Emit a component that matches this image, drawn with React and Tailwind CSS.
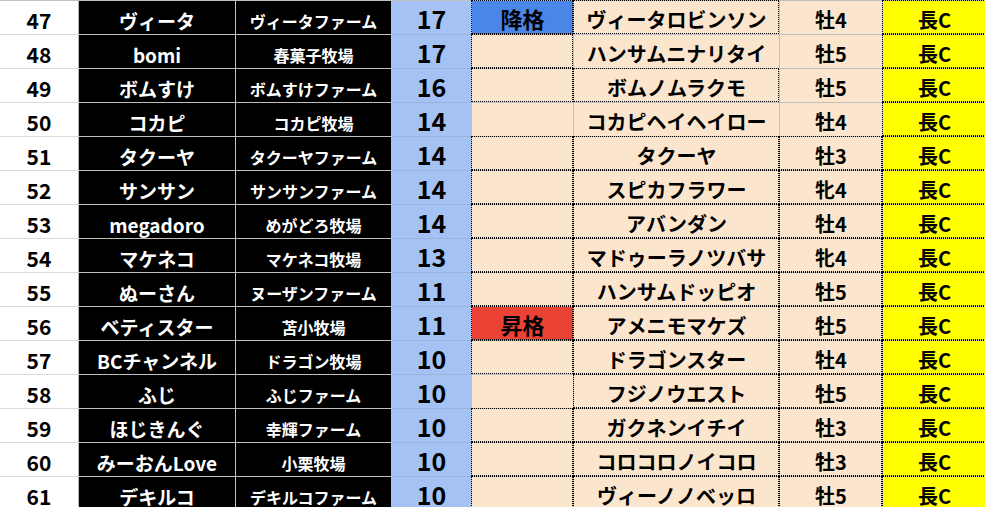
import React from 'react';

const rows = [
  [47, 'ヴィータ', 'ヴィータファーム', 17, '降格', 'ヴィータロビンソン', '牡4'],
  [48, 'bomi', '春菓子牧場', 17, '', 'ハンサムニナリタイ', '牡5'],
  [49, 'ボムすけ', 'ボムすけファーム', 16, '', 'ボムノムラクモ', '牡5'],
  [50, 'コカピ', 'コカピ牧場', 14, '', 'コカピヘイヘイロー', '牡4'],
  [51, 'タクーヤ', 'タクーヤファーム', 14, '', 'タクーヤ', '牡3'],
  [52, 'サンサン', 'サンサンファーム', 14, '', 'スピカフラワー', '牝4'],
  [53, 'megadoro', 'めがどろ牧場', 14, '', 'アバンダン', '牡4'],
  [54, 'マケネコ', 'マケネコ牧場', 13, '', 'マドゥーラノツバサ', '牝4'],
  [55, 'ぬーさん', 'ヌーザンファーム', 11, '', 'ハンサムドッピオ', '牡5'],
  [56, 'ベティスター', '苫小牧場', 11, '昇格', 'アメニモマケズ', '牡5'],
  [57, 'BCチャンネル', 'ドラゴン牧場', 10, '', 'ドラゴンスター', '牡4'],
  [58, 'ふじ', 'ふじファーム', 10, '', 'フジノウエスト', '牡5'],
  [59, 'ほじきんぐ', '幸輝ファーム', 10, '', 'ガクネンイチイ', '牡3'],
  [60, 'みーおんLove', '小栗牧場', 10, '', 'コロコロノイコロ', '牡3'],
  [61, 'デキルコ', 'デキルコファーム', 10, '', 'ヴィーノノベッロ', '牡5'],
];

// which of status / horse / sex cells carry the dotted border
const dotted = {
  47: ['status', 'horse'],
  48: ['status'],
  49: ['status', 'horse'],
  50: [],
  58: ['horse', 'sex'],
};
const defaultDotted = ['status', 'horse', 'sex'];

const Dots = () => (
  <div className="absolute -top-px -left-px right-0 bottom-0 border border-dotted border-black pointer-events-none" />
);

const Row = ({ r }) => {
  const [rank, name, farm, score, status, horse, sex] = r;
  const dots = dotted[rank] || defaultDotted;
  const statusBg = status === '降格' ? 'bg-[#4a86e8]' : status === '昇格' ? 'bg-[#ea4335]' : 'bg-[#fce5cd]';
  return (
    <>
      <div className="flex items-center justify-center h-[34px] pt-[5px] bg-white border-b border-r border-b-[#d9d9d9] border-r-[#b8b8b8] text-[21px] leading-none">
        {rank}
      </div>
      <div className="flex items-center justify-center h-[34px] pt-[5px] bg-black text-white border-b border-r border-[#c0c0c0] text-[19px] leading-none whitespace-nowrap">
        {name}
      </div>
      <div className="flex items-center justify-center h-[34px] pt-[7px] bg-black text-white border-b border-r border-[#c0c0c0] text-[16px] leading-none whitespace-nowrap">
        {farm}
      </div>
      <div className="flex items-center justify-center h-[34px] pt-[1px] bg-[#a4c2f4] border-b border-r border-b-[#9cb2da] border-r-[#a4c2f4] text-[25px] leading-none">
        {score}
      </div>
      <div className={`relative flex items-center justify-center h-[34px] pt-[1px] ${statusBg} border-b border-r border-[#bfbfbf] text-[22px] leading-none`}>
        {status}
        {dots.includes('status') && <Dots />}
      </div>
      <div className="relative flex items-center justify-center h-[34px] pt-[5px] bg-[#fce5cd] border-b border-r border-[#bfbfbf] text-[20px] leading-none whitespace-nowrap">
        {horse}
        {dots.includes('horse') && <Dots />}
      </div>
      <div className="relative flex items-center justify-center h-[34px] pt-[5px] bg-[#fce5cd] border-b border-r border-[#bfbfbf] text-[20px] leading-none">
        {sex}
        {dots.includes('sex') && <Dots />}
      </div>
      <div className="relative flex items-center justify-center h-[34px] pt-[5px] bg-[#ffff00] border-b border-r border-[#bfbfbf] text-[20px] leading-none">
        長C
        <Dots />
      </div>
    </>
  );
};

export default function App() {
  return (
    <div className="w-[985px] h-[507px] overflow-hidden bg-white">
      <div
        className="grid grid-cols-[79px_157px_156px_80px_102px_206px_103px_104px] border-t border-[#c0c0c0] font-bold text-black"
        style={{ fontFamily: '"Noto Sans CJK JP", "Noto Sans", sans-serif' }}
      >
        {rows.map((r) => (
          <Row key={r[0]} r={r} />
        ))}
      </div>
    </div>
  );
}
